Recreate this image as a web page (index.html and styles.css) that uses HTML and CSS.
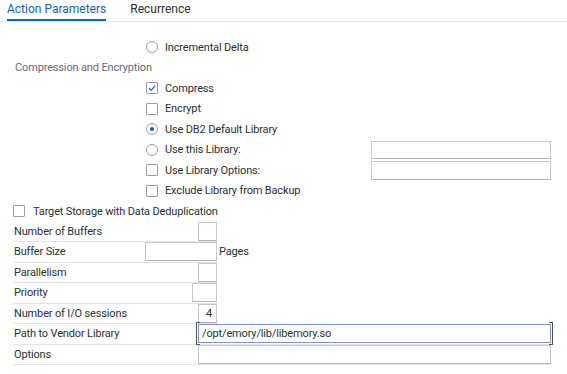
FILE: index.html
```html
<!DOCTYPE html>
<html lang="en">
<head>
    <meta charset="UTF-8">
    <title>Action Parameters</title>
    <link rel="stylesheet" href="styles.css">
</head>
<body>
    <div class="tabs">
        <div class="tab active">Action Parameters</div>
        <div class="tab">Recurrence</div>
    </div>
    <div class="content">
        <div class="line opt-indent">
            <label class="choice"><span class="radio"></span>Incremental Delta</label>
        </div>
        <div class="line section-label">Compression and Encryption</div>
        <div class="line opt-indent">
            <label class="choice"><span class="box checked"><svg viewBox="0 0 10 10" width="10" height="10"><path d="M2 5.2 L4.2 7.4 L8.2 2.6" fill="none" stroke="#0a6ed1" stroke-width="1.3"/></svg></span>Compress</label>
        </div>
        <div class="line opt-indent">
            <label class="choice"><span class="box"></span>Encrypt</label>
        </div>
        <div class="line opt-indent">
            <label class="choice"><span class="radio selected"></span>Use DB2 Default Library</label>
        </div>
        <div class="line opt-indent opt-with-input">
            <label class="choice"><span class="radio"></span>Use this Library:</label>
            <input type="text" class="text-input wide">
        </div>
        <div class="line opt-indent opt-with-input">
            <label class="choice"><span class="box"></span>Use Library Options:</label>
            <input type="text" class="text-input wide">
        </div>
        <div class="line opt-indent">
            <label class="choice"><span class="box"></span>Exclude Library from Backup</label>
        </div>
        <div class="line target">
            <label class="choice"><span class="box"></span>Target Storage with Data Deduplication</label>
        </div>

        <div class="field-line">
            <div class="field"><span class="field-label">Number of Buffers</span><input type="text" class="text-input w19"></div>
        </div>
        <div class="field-line">
            <div class="field"><span class="field-label">Buffer Size</span><input type="text" class="text-input w72"></div>
            <span class="unit">Pages</span>
        </div>
        <div class="field-line">
            <div class="field"><span class="field-label">Parallelism</span><input type="text" class="text-input w19"></div>
        </div>
        <div class="field-line">
            <div class="field"><span class="field-label">Priority</span><input type="text" class="text-input w25"></div>
        </div>
        <div class="field-line">
            <div class="field"><span class="field-label">Number of I/O sessions</span><input type="text" class="text-input w19 num" value="4"></div>
        </div>
        <div class="field-line">
            <div class="field full"><span class="field-label">Path to Vendor Library</span><span class="focus-wrap"><input type="text" class="text-input focused" value="/opt/emory/lib/libemory.so"></span></div>
        </div>
        <div class="field-line">
            <div class="field full"><span class="field-label">Options</span><input type="text" class="text-input wlong"></div>
        </div>
    </div>
</body>
</html>
```

FILE: styles.css
```css
body {
    margin: 0;
    background: #fff;
    font-family: Roboto, "Liberation Sans", Arial, sans-serif;
    font-size: 11px;
    letter-spacing: -0.15px;
    color: #2b2f33;
}
.tabs {
    display: flex;
    gap: 24px;
    height: 21px;
    padding-left: 7px;
    border-bottom: 1px solid #e5e5e5;
    letter-spacing: 0;
}
.tab {
    font-size: 12px;
    line-height: 19px;
    height: 19px;
    color: #2b2f33;
}
.tab.active {
    color: #0b63c4;
    border-bottom: 2px solid #0b63c4;
}
.content {
    padding-top: 15px;
}
.line {
    height: 20.5px;
    display: flex;
    align-items: center;
}
.opt-indent {
    padding-left: 146px;
}
.opt-with-input .choice {
    width: 225px;
}
.section-label {
    padding-left: 15px;
    color: #6a6d70;
}
.target {
    padding-left: 13px;
}
.choice {
    display: flex;
    align-items: center;
    white-space: nowrap;
}
.box {
    width: 10px;
    height: 10px;
    border: 1px solid #9a9ea3;
    border-radius: 1px;
    margin-right: 7px;
    display: flex;
}
.target .box {
    margin-right: 8px;
}
.radio {
    width: 10px;
    height: 10px;
    border: 1px solid #9a9ea3;
    border-radius: 50%;
    margin-right: 7px;
    display: flex;
    align-items: center;
    justify-content: center;
}
.radio.selected::after {
    content: "";
    width: 4px;
    height: 4px;
    border-radius: 50%;
    background: #0a5db8;
}
.text-input {
    box-sizing: border-box;
    height: 19px;
    border: 1px solid #c6c9cc;
    border-bottom-color: #b3b6b9;
    padding: 0 4px;
    font-family: inherit;
    font-size: 11px;
    letter-spacing: -0.15px;
    color: #2b2f33;
    outline: none;
    background: #fff;
}
.text-input.wide {
    width: 180px;
    height: 18.5px;
}
.field-line {
    height: 20.5px;
    display: flex;
    align-items: flex-start;
    padding-left: 13px;
}
.field {
    box-sizing: border-box;
    width: 204px;
    height: 20.5px;
    display: flex;
    align-items: flex-start;
    border-bottom: 1px solid #e2e3e4;
}
.field.full {
    width: 538px;
}
.field-label {
    flex: 1;
    line-height: 20px;
    padding-left: 1px;
}
.w19 { width: 19px; }
.w25 { width: 25px; }
.w72 { width: 72px; }
.wlong { width: 353px; }
.num {
    text-align: right;
    padding-right: 4px;
}
.unit {
    margin-left: 2px;
    line-height: 20px;
}
.focus-wrap {
    position: relative;
    display: flex;
}
.focus-wrap::before, .focus-wrap::after {
    content: "";
    position: absolute;
    top: -2px;
    bottom: -2px;
    width: 3px;
    border-top: 1px solid #555;
    border-bottom: 1px solid #555;
}
.focus-wrap::before {
    left: -2px;
    border-left: 1px solid #555;
}
.focus-wrap::after {
    right: -2px;
    border-right: 1px solid #555;
}
.text-input.focused {
    width: 353px;
    border: 1px solid #6f9bd1;
    padding-left: 3px;
}
```
